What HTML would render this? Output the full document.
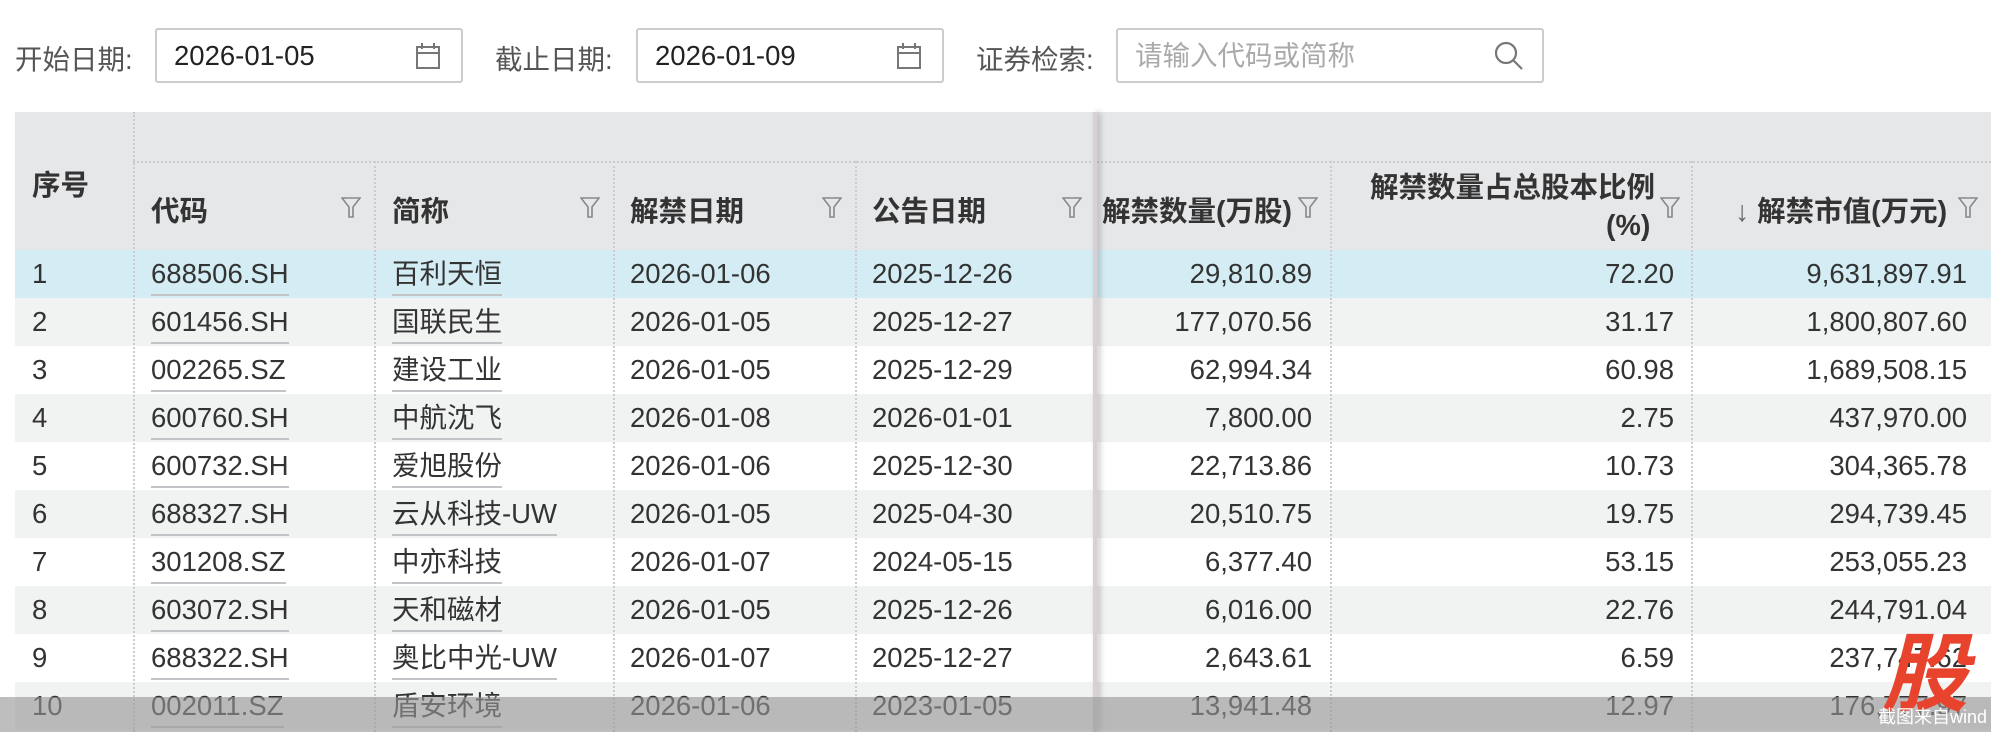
<!DOCTYPE html>
<html><head><meta charset="utf-8"><style>
*{margin:0;padding:0;box-sizing:border-box}
body{width:1991px;height:732px;overflow:hidden;background:#fff;font-family:"Liberation Sans","Noto Sans CJK SC",sans-serif;color:#333;position:relative}
.lbl{position:absolute;top:37px;font-size:27.5px;color:#555}
.box{position:absolute;top:28px;height:55px;border:2px solid #ccc;border-radius:3px;font-size:27.5px;line-height:51px;padding-left:17px;color:#222}
.ph{color:#aaa}
.hdr{position:absolute;left:15px;top:112px;width:1976px;height:138px;background:#e6e7e9}
.row{position:absolute;left:15px;width:1976px;height:48px}
.c{position:absolute;font-size:27.5px;line-height:48px;white-space:nowrap}
.u{border-bottom:2px solid #c4c4c8;line-height:40px;display:inline-block}
.h{position:absolute;font-size:28.5px;font-weight:bold;color:#333;white-space:nowrap}
.vl{position:absolute;border-left:2px dotted #ccc;top:112px;height:620px}
.f{position:absolute;width:20px;height:22px}
</style></head><body>
<div class="lbl" style="left:15px">开始日期:</div>
<div class="box" style="left:155px;width:308px">2026-01-05
<svg style="position:absolute;right:20px;top:12px" width="26" height="28" viewBox="0 0 26 28" fill="none" stroke="#777" stroke-width="2"><rect x="2" y="5" width="22" height="21"/><line x1="2" y1="11" x2="24" y2="11"/><line x1="7" y1="1" x2="7" y2="7"/><line x1="19" y1="1" x2="19" y2="7"/></svg></div>
<div class="lbl" style="left:495px">截止日期:</div>
<div class="box" style="left:636px;width:308px">2026-01-09
<svg style="position:absolute;right:20px;top:12px" width="26" height="28" viewBox="0 0 26 28" fill="none" stroke="#777" stroke-width="2"><rect x="2" y="5" width="22" height="21"/><line x1="2" y1="11" x2="24" y2="11"/><line x1="7" y1="1" x2="7" y2="7"/><line x1="19" y1="1" x2="19" y2="7"/></svg></div>
<div class="lbl" style="left:976px">证券检索:</div>
<div class="box ph" style="left:1116px;width:428px">请输入代码或简称
<svg style="position:absolute;right:18px;top:11px" width="30" height="30" viewBox="0 0 30 30" fill="none" stroke="#777" stroke-width="2.2"><circle cx="12" cy="12" r="10"/><line x1="19" y1="19" x2="28" y2="28"/></svg></div>

<div class="hdr"></div>
<div style="position:absolute;left:133px;top:161px;width:1858px;border-top:2px dotted #ccc"></div>
<div class="h" style="left:32px;top:163px">序号</div>
<div class="h" style="left:151px;top:189px">代码</div>
<div class="h" style="left:392px;top:189px">简称</div>
<div class="h" style="left:630px;top:189px">解禁日期</div>
<div class="h" style="left:872px;top:189px">公告日期</div>
<div class="h" style="left:1102px;top:189px">解禁数量(万股)</div>
<div class="h" style="left:1370px;top:165px">解禁数量占总股本比例</div>
<div class="h" style="left:1606px;top:210px">(%)</div>
<div class="h" style="left:1735px;top:189px"><span style="font-weight:normal;color:#666">↓ </span>解禁市值(万元)</div>
<svg width="0" height="0"><defs><g id="fl"><path d="M1 2 H19 L12 11 V21 H8 V11 Z" fill="none" stroke="#888" stroke-width="1.6"/></g></defs></svg>
<svg class="f" style="left:341px;top:196px"><use href="#fl"/></svg>
<svg class="f" style="left:580px;top:196px"><use href="#fl"/></svg>
<svg class="f" style="left:822px;top:196px"><use href="#fl"/></svg>
<svg class="f" style="left:1062px;top:196px"><use href="#fl"/></svg>
<svg class="f" style="left:1298px;top:196px"><use href="#fl"/></svg>
<svg class="f" style="left:1660px;top:196px"><use href="#fl"/></svg>
<svg class="f" style="left:1958px;top:196px"><use href="#fl"/></svg>

<div class="row" style="top:250px;background:#d4edf4"><span class="c" style="left:17px">1</span><span class="c" style="left:136px"><span class="u">688506.SH</span></span><span class="c" style="left:377px"><span class="u">百利天恒</span></span><span class="c" style="left:615px">2026-01-06</span><span class="c" style="left:857px">2025-12-26</span><span class="c" style="right:679px">29,810.89</span><span class="c" style="right:317px">72.20</span><span class="c" style="right:24px">9,631,897.91</span></div>
<div class="row" style="top:298px;background:#f1f2f2"><span class="c" style="left:17px">2</span><span class="c" style="left:136px"><span class="u">601456.SH</span></span><span class="c" style="left:377px"><span class="u">国联民生</span></span><span class="c" style="left:615px">2026-01-05</span><span class="c" style="left:857px">2025-12-27</span><span class="c" style="right:679px">177,070.56</span><span class="c" style="right:317px">31.17</span><span class="c" style="right:24px">1,800,807.60</span></div>
<div class="row" style="top:346px;background:#fff"><span class="c" style="left:17px">3</span><span class="c" style="left:136px"><span class="u">002265.SZ</span></span><span class="c" style="left:377px"><span class="u">建设工业</span></span><span class="c" style="left:615px">2026-01-05</span><span class="c" style="left:857px">2025-12-29</span><span class="c" style="right:679px">62,994.34</span><span class="c" style="right:317px">60.98</span><span class="c" style="right:24px">1,689,508.15</span></div>
<div class="row" style="top:394px;background:#f1f2f2"><span class="c" style="left:17px">4</span><span class="c" style="left:136px"><span class="u">600760.SH</span></span><span class="c" style="left:377px"><span class="u">中航沈飞</span></span><span class="c" style="left:615px">2026-01-08</span><span class="c" style="left:857px">2026-01-01</span><span class="c" style="right:679px">7,800.00</span><span class="c" style="right:317px">2.75</span><span class="c" style="right:24px">437,970.00</span></div>
<div class="row" style="top:442px;background:#fff"><span class="c" style="left:17px">5</span><span class="c" style="left:136px"><span class="u">600732.SH</span></span><span class="c" style="left:377px"><span class="u">爱旭股份</span></span><span class="c" style="left:615px">2026-01-06</span><span class="c" style="left:857px">2025-12-30</span><span class="c" style="right:679px">22,713.86</span><span class="c" style="right:317px">10.73</span><span class="c" style="right:24px">304,365.78</span></div>
<div class="row" style="top:490px;background:#f1f2f2"><span class="c" style="left:17px">6</span><span class="c" style="left:136px"><span class="u">688327.SH</span></span><span class="c" style="left:377px"><span class="u">云从科技-UW</span></span><span class="c" style="left:615px">2026-01-05</span><span class="c" style="left:857px">2025-04-30</span><span class="c" style="right:679px">20,510.75</span><span class="c" style="right:317px">19.75</span><span class="c" style="right:24px">294,739.45</span></div>
<div class="row" style="top:538px;background:#fff"><span class="c" style="left:17px">7</span><span class="c" style="left:136px"><span class="u">301208.SZ</span></span><span class="c" style="left:377px"><span class="u">中亦科技</span></span><span class="c" style="left:615px">2026-01-07</span><span class="c" style="left:857px">2024-05-15</span><span class="c" style="right:679px">6,377.40</span><span class="c" style="right:317px">53.15</span><span class="c" style="right:24px">253,055.23</span></div>
<div class="row" style="top:586px;background:#f1f2f2"><span class="c" style="left:17px">8</span><span class="c" style="left:136px"><span class="u">603072.SH</span></span><span class="c" style="left:377px"><span class="u">天和磁材</span></span><span class="c" style="left:615px">2026-01-05</span><span class="c" style="left:857px">2025-12-26</span><span class="c" style="right:679px">6,016.00</span><span class="c" style="right:317px">22.76</span><span class="c" style="right:24px">244,791.04</span></div>
<div class="row" style="top:634px;background:#fff"><span class="c" style="left:17px">9</span><span class="c" style="left:136px"><span class="u">688322.SH</span></span><span class="c" style="left:377px"><span class="u">奥比中光-UW</span></span><span class="c" style="left:615px">2026-01-07</span><span class="c" style="left:857px">2025-12-27</span><span class="c" style="right:679px">2,643.61</span><span class="c" style="right:317px">6.59</span><span class="c" style="right:24px">237,747.62</span></div>
<div class="row" style="top:682px;background:#f1f2f2"><span class="c" style="left:17px">10</span><span class="c" style="left:136px"><span class="u">002011.SZ</span></span><span class="c" style="left:377px"><span class="u">盾安环境</span></span><span class="c" style="left:615px">2026-01-06</span><span class="c" style="left:857px">2023-01-05</span><span class="c" style="right:679px">13,941.48</span><span class="c" style="right:317px">12.97</span><span class="c" style="right:24px">176,777.97</span></div>

<div class="vl" style="left:133px"></div>
<div class="vl" style="left:374px;top:161px;height:571px"></div>
<div class="vl" style="left:613px;top:161px;height:571px"></div>
<div class="vl" style="left:855px;top:161px;height:571px"></div>
<div class="vl" style="left:1330px;top:161px;height:571px"></div>
<div class="vl" style="left:1691px;top:161px;height:571px"></div>
<div style="position:absolute;left:1093px;top:112px;width:4px;height:620px;background:#d8d0d4;box-shadow:3px 0 6px rgba(0,0,0,.25)"></div>

<div style="position:absolute;left:0;top:697px;width:1991px;height:35px;background:rgba(150,150,150,.62)"></div>
<div style="position:absolute;left:1882px;top:632px;font-size:86px;font-weight:bold;font-style:italic;color:#e8432d;line-height:86px">股</div>
<div style="position:absolute;left:1878px;top:703px;font-size:18px;color:#fff">截图来自wind</div>
</body></html>
